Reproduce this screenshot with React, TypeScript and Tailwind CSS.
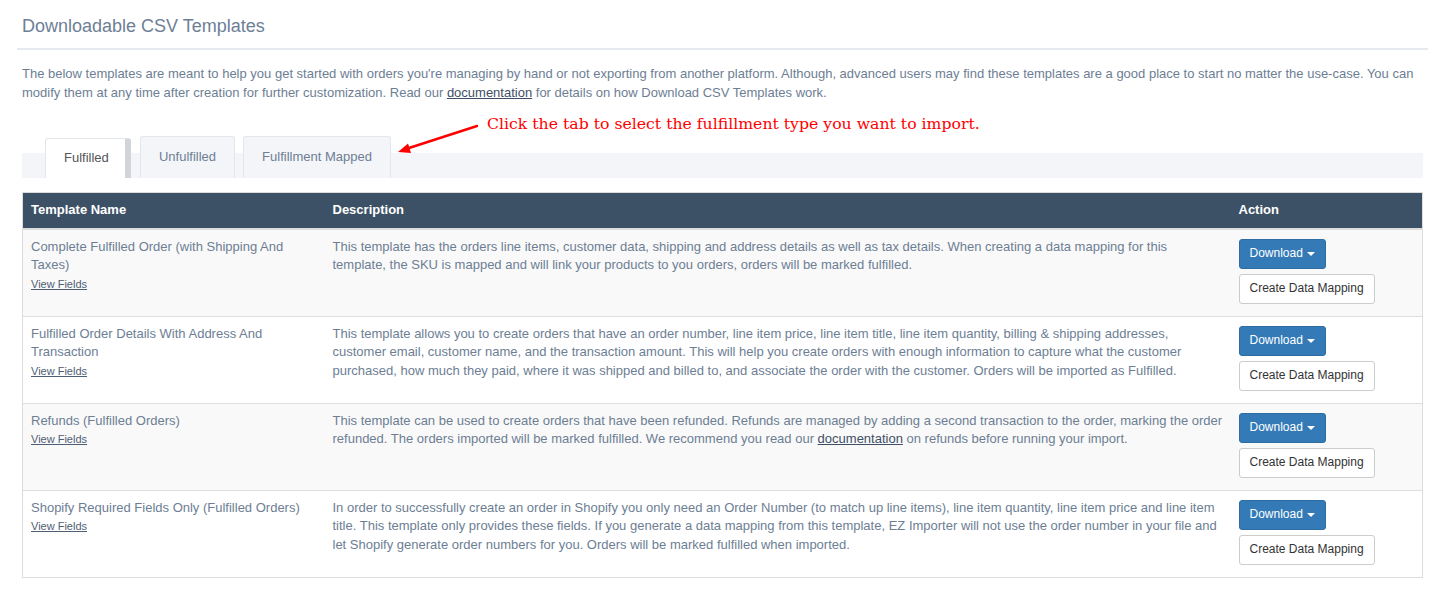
import React from "react";

const rows = [
  {
    name: "Complete Fulfilled Order (with Shipping And Taxes)",
    desc: (
      <>
        This template has the orders line items, customer data, shipping and address details as well as tax details. When creating a data mapping for this template, the SKU is mapped and will link your products to you orders, orders will be marked fulfilled.
      </>
    ),
  },
  {
    name: "Fulfilled Order Details With Address And Transaction",
    desc: (
      <>
        This template allows you to create orders that have an order number, line item price, line item title, line item quantity, billing &amp; shipping addresses, customer email, customer name, and the transaction amount. This will help you create orders with enough information to capture what the customer purchased, how much they paid, where it was shipped and billed to, and associate the order with the customer. Orders will be imported as Fulfilled.
      </>
    ),
  },
  {
    name: "Refunds (Fulfilled Orders)",
    desc: (
      <>
        This template can be used to create orders that have been refunded. Refunds are managed by adding a second transaction to the order, marking the order refunded. The orders imported will be marked fulfilled. We recommend you read our{" "}
        <a href="#" className="underline text-[#3f4f66]">documentation</a> on refunds before running your import.
      </>
    ),
  },
  {
    name: "Shopify Required Fields Only (Fulfilled Orders)",
    desc: (
      <>
        In order to successfully create an order in Shopify you only need an Order Number (to match up line items), line item quantity, line item price and line item title. This template only provides these fields. If you generate a data mapping from this template, EZ Importer will not use the order number in your file and let Shopify generate order numbers for you. Orders will be marked fulfilled when imported.
      </>
    ),
  },
];

export default function App() {
  return (
    <div className="w-[1433px] min-h-[614px] bg-white pl-[17px] pr-[5px] text-[#6d7e94] font-['Liberation_Sans',Arial,sans-serif] text-[13px] leading-[1.42857]">
      <div className="px-[5px] pt-[15px] pb-[11px] border-b-2 border-[#e6e9ee]">
        <h1 className="text-[18px] leading-[22px] text-[#6d8096]">Downloadable CSV Templates</h1>
      </div>
      <div className="px-[5px]">
        <p className="mt-[15px]">
          The below templates are meant to help you get started with orders you're managing by hand or not exporting from another platform. Although, advanced users may find these templates are a good place to start no matter the use-case. You can modify them at any time after creation for further customization. Read our{" "}
          <a href="#" className="underline text-[#3f4f66]">documentation</a> for details on how Download CSV Templates work.
        </p>

        <div className="relative mt-[34px] h-[42px] flex items-end pl-[23px] gap-[9px] bg-[linear-gradient(to_bottom,transparent_17px,#f4f5f9_17px)]">
          <div className="h-[40px] w-[86px] flex items-center pl-[18px] bg-white border border-[#e3e6eb] border-r-[6px] border-r-[#d1d5da] border-b-0 rounded-t-[3px] text-[#555]">
            Fulfilled
          </div>
          <div className="h-[42px] w-[95px] flex items-center justify-center bg-[#f4f5f9] border border-[#e3e6eb] border-b-0 rounded-t-[3px] text-[#6d7e94]">
            Unfulfilled
          </div>
          <div className="h-[42px] w-[148px] -ml-px flex items-center justify-center bg-[#f4f5f9] border border-[#e3e6eb] border-b-0 rounded-t-[3px] text-[#6d7e94]">
            Fulfillment Mapped
          </div>
          <div className="absolute left-[465px] top-[-22px] text-[15.7px] leading-[20px] text-[#ff0000] font-['DejaVu_Serif',serif] whitespace-nowrap">
            Click the tab to select the fulfillment type you want to import.
          </div>
          <svg className="absolute left-[374px] top-[-14px]" width="110" height="40" viewBox="0 0 110 40">
            <line x1="81" y1="4" x2="13" y2="26" stroke="#ff0000" strokeWidth="2.5" strokeLinecap="round" />
            <polygon points="2,30 15,31 12,21.5" fill="#ff0000" />
          </svg>
        </div>

        <table className="mt-[14px] w-[1401px] table-fixed border-collapse border border-[#dddddd]">
          <colgroup>
            <col className="w-[302px]" />
            <col className="w-[906px]" />
            <col />
          </colgroup>
          <thead>
            <tr className="bg-[#3d5166] text-white font-bold text-left">
              <th className="px-[8px] py-[8px] border-b-2 border-[#dddddd] text-left">Template Name</th>
              <th className="px-[8px] py-[8px] border-b-2 border-[#dddddd] text-left">Description</th>
              <th className="px-[8px] py-[8px] border-b-2 border-[#dddddd] text-left">Action</th>
            </tr>
          </thead>
          <tbody>
            {rows.map((r, i) => (
              <tr key={i} className={i % 2 === 0 ? "bg-[#f9f9f9]" : "bg-white"}>
                <td className="p-[8px] align-top border-t border-[#dddddd]">
                  <div>{r.name}</div>
                  <div>
                    <a href="#" className="underline text-[11px] text-[#4e5e74]">View Fields</a>
                  </div>
                </td>
                <td className="p-[8px] align-top border-t border-[#dddddd]">{r.desc}</td>
                <td className="px-[8px] pt-[9px] pb-[8px] align-top border-t border-[#dddddd]">
                  <div className="flex flex-col items-start gap-[5px] pb-[4px]">
                    <button className="h-[30px] px-[10px] rounded-[3px] bg-[#337ab7] border border-[#2e6da4] text-white text-[12px] flex items-center">
                      Download
                      <span className="ml-[4px] inline-block w-0 h-0 border-l-[4px] border-r-[4px] border-t-[4px] border-l-transparent border-r-transparent border-t-white" />
                    </button>
                    <button className="h-[30px] px-[10px] rounded-[3px] bg-white border border-[#cccccc] text-[#333] text-[12px]">
                      Create Data Mapping
                    </button>
                  </div>
                </td>
              </tr>
            ))}
          </tbody>
        </table>
      </div>
    </div>
  );
}
